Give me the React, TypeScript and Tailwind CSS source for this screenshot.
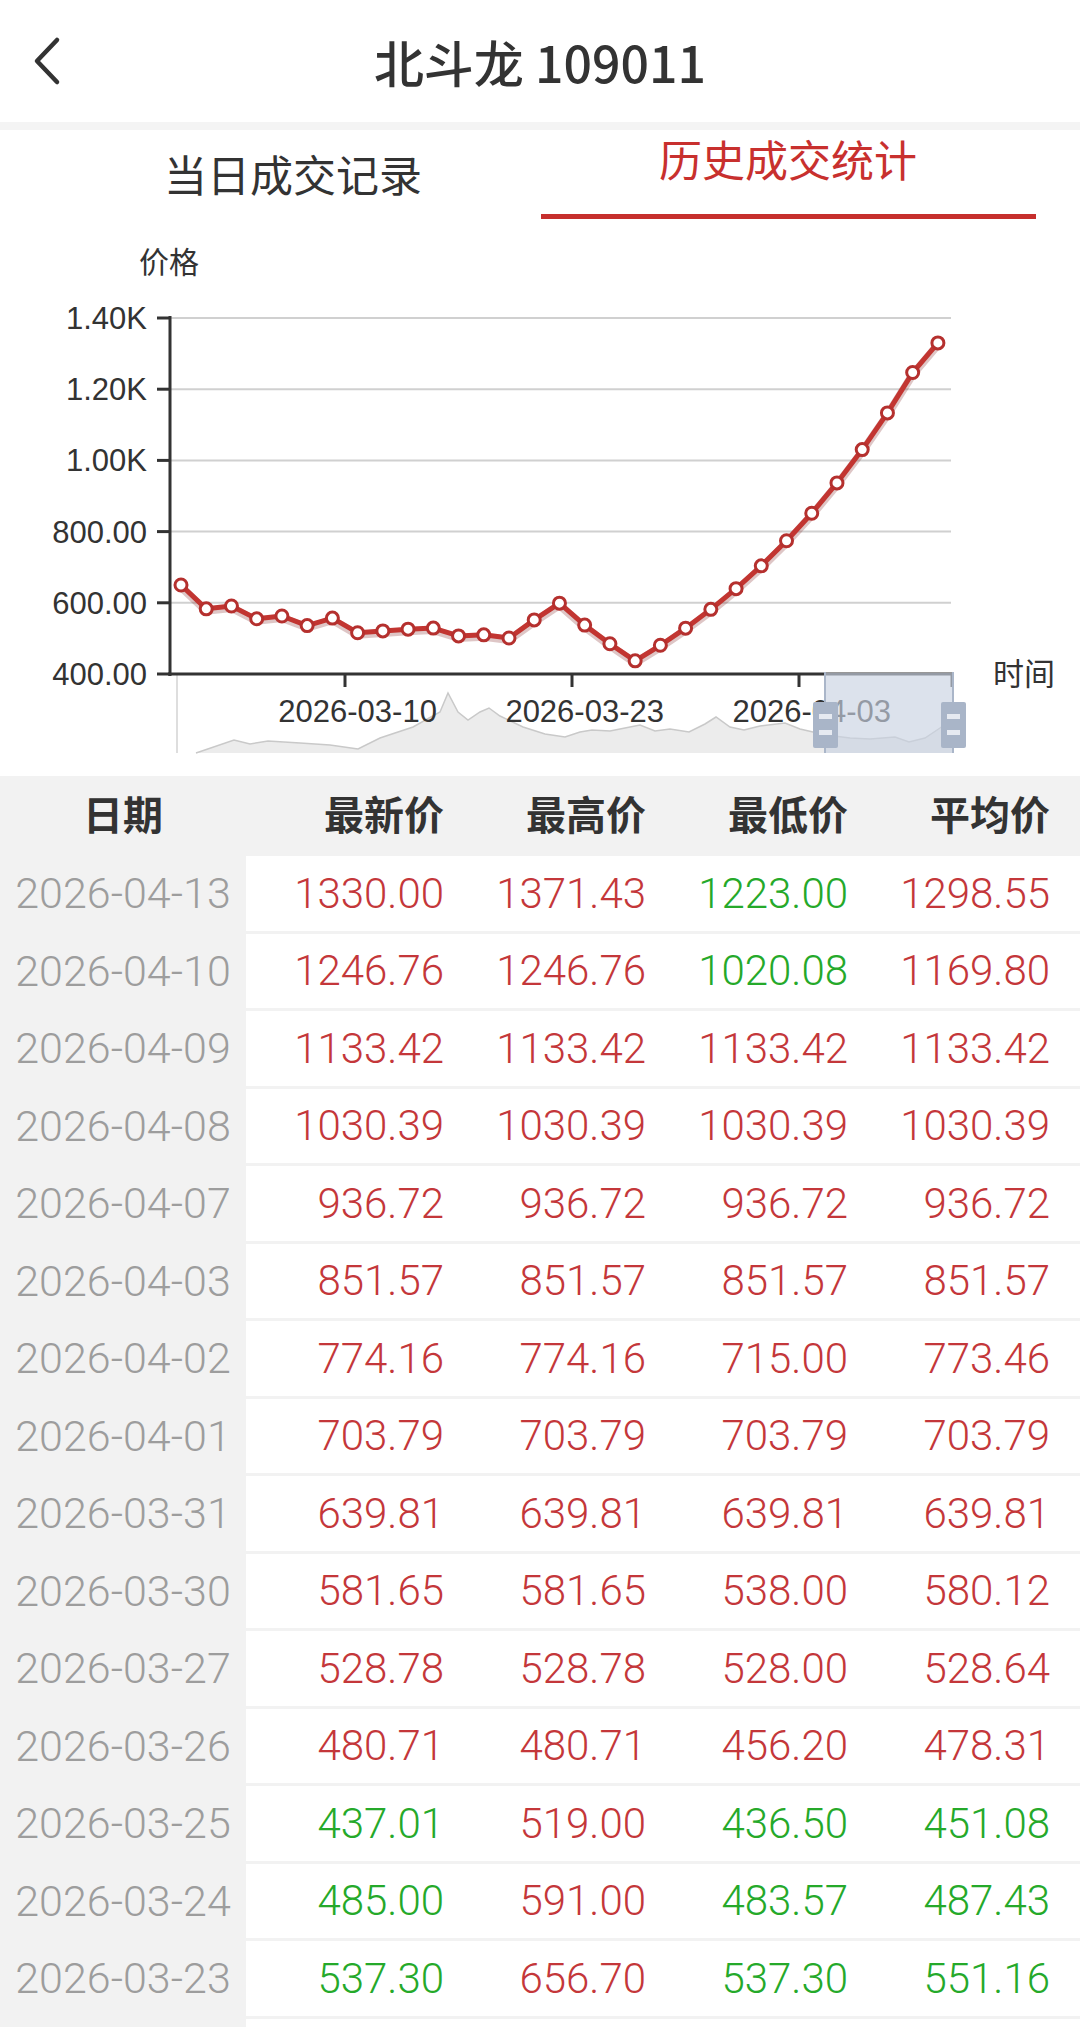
import React from 'react'

const UP = '#c4373a'
const DOWN = '#25a92a'

// latest price per day, oldest first (used for the chart)
const series = [
  650, 583, 591, 555, 563, 536, 557, 516, 521, 526, 529, 507, 510, 501, 552, 599,
  537.3, 485, 437.01, 480.71, 528.78, 581.65, 639.81, 703.79, 774.16, 851.57, 936.72,
  1030.39, 1133.42, 1246.76, 1330,
]

const rows = [
  ['2026-04-13', '1330.00', '1371.43', '1223.00', '1298.55'],
  ['2026-04-10', '1246.76', '1246.76', '1020.08', '1169.80'],
  ['2026-04-09', '1133.42', '1133.42', '1133.42', '1133.42'],
  ['2026-04-08', '1030.39', '1030.39', '1030.39', '1030.39'],
  ['2026-04-07', '936.72', '936.72', '936.72', '936.72'],
  ['2026-04-03', '851.57', '851.57', '851.57', '851.57'],
  ['2026-04-02', '774.16', '774.16', '715.00', '773.46'],
  ['2026-04-01', '703.79', '703.79', '703.79', '703.79'],
  ['2026-03-31', '639.81', '639.81', '639.81', '639.81'],
  ['2026-03-30', '581.65', '581.65', '538.00', '580.12'],
  ['2026-03-27', '528.78', '528.78', '528.00', '528.64'],
  ['2026-03-26', '480.71', '480.71', '456.20', '478.31'],
  ['2026-03-25', '437.01', '519.00', '436.50', '451.08'],
  ['2026-03-24', '485.00', '591.00', '483.57', '487.43'],
  ['2026-03-23', '537.30', '656.70', '537.30', '551.16'],
]

const px = (i: number) => 181 + i * 25.23
const py = (v: number) => 674 - (v - 400) * 0.356

const mini: [number, number][] = [
  [196, 753], [234, 740], [250, 744], [268, 741], [300, 743], [330, 745], [358, 749],
  [380, 738], [413, 727], [440, 712], [448, 693], [458, 712], [468, 720], [480, 712],
  [489, 708], [500, 716], [523, 727], [545, 734], [565, 737], [580, 732], [592, 730],
  [610, 731], [625, 728], [640, 725], [655, 731], [670, 729], [689, 732], [705, 724],
  [716, 717], [730, 727], [744, 730], [760, 726], [785, 723], [800, 729], [826, 735],
  [850, 738], [870, 739], [895, 737], [909, 742], [925, 738], [940, 728], [953, 718],
]

const axisFont = { fontFamily: '"Liberation Sans", Arial, sans-serif' }

function Chart() {
  const ticksY = ['1.40K', '1.20K', '1.00K', '800.00', '600.00', '400.00']
  const line = series.map((v, i) => `${px(i)},${py(v)}`).join(' ')
  const miniLine = mini.map(p => p.join(',')).join(' ')
  return (
    <svg width="1080" height="554" viewBox="0 222 1080 554" className="block">
      <text x="169" y="273" fontSize="30" fill="#333" textAnchor="middle" style={{ fontFamily: '"Noto Sans CJK SC", sans-serif' }}>价格</text>

      {ticksY.map((t, i) => {
        const y = 318 + i * 71.2
        return (
          <g key={t}>
            {i < 5 && <line x1="170" y1={y} x2="951" y2={y} stroke="#d0d0d0" strokeWidth="2" />}
            <line x1="157" y1={y} x2="170" y2={y} stroke="#333" strokeWidth="3" />
            <text x="147" y={y + 11} fontSize="31" fill="#333" textAnchor="end" style={axisFont}>{t}</text>
          </g>
        )
      })}

      {/* data zoom background */}
      <polygon points={`177,753 ${miniLine} 953,753`} fill="#ececec" />
      <polyline points={miniLine} fill="none" stroke="#c9c9c9" strokeWidth="1.5" />
      <line x1="177" y1="674" x2="177" y2="753" stroke="#dedede" strokeWidth="2" />

      <line x1="170" y1="316" x2="170" y2="676" stroke="#333" strokeWidth="3" />
      <line x1="168" y1="674" x2="953" y2="674" stroke="#333" strokeWidth="3" />
      {[345, 572, 799, 952].map(x => (
        <line key={x} x1={x} y1="674" x2={x} y2="687" stroke="#333" strokeWidth="3" />
      ))}
      {[['2026-03-10', 7], ['2026-03-23', 16], ['2026-04-03', 25]].map(([t, i]) => (
        <text key={t} x={px(i as number)} y="722" fontSize="31" fill="#333" textAnchor="middle" style={axisFont}>{t}</text>
      ))}
      <text x="993" y="685" fontSize="31" fill="#333" style={{ fontFamily: '"Noto Sans CJK SC", sans-serif' }}>时间</text>

      {/* selected window */}
      <rect x="825" y="673" width="128" height="80" fill="#c9d2e2" opacity="0.65" />
      <line x1="825" y1="672" x2="825" y2="753" stroke="#aab6c9" strokeWidth="2" />
      <line x1="953" y1="672" x2="953" y2="753" stroke="#aab6c9" strokeWidth="2" />
      {[813, 941].map(x => (
        <g key={x}>
          <rect x={x} y="702" width="25" height="46" rx="2" fill="#a9b5c8" />
          <rect x={x + 6} y="714" width="13" height="5" fill="#e6eaf1" />
          <rect x={x + 6} y="730" width="13" height="5" fill="#e6eaf1" />
        </g>
      ))}

      {/* price line */}
      <polyline points={line} fill="none" stroke="#7a1d1d" strokeOpacity="0.25" strokeWidth="8" strokeLinejoin="round" transform="translate(0 2)" />
      <polyline points={line} fill="none" stroke="#c23531" strokeWidth="5" strokeLinejoin="round" />
      {series.map((v, i) => (
        <circle key={i} cx={px(i)} cy={py(v)} r="6" fill="#fff" stroke="#b5302e" strokeWidth="3" />
      ))}
    </svg>
  )
}

export default function App() {
  const cjk = { fontFamily: '"Liberation Sans", "Noto Sans CJK SC", sans-serif' }
  const num = { fontFamily: 'Roboto, "Liberation Sans", sans-serif' }
  return (
    <div className="w-[1080px] bg-white text-[#333]" style={cjk}>
      {/* header */}
      <div className="grid h-[122px] grid-cols-[1fr_auto_1fr] items-center">
        <div className="pl-[33px]">
          <svg width="30" height="50" viewBox="0 0 30 50">
            <polyline points="24,4 4,25 24,46" fill="none" stroke="#333" strokeWidth="4.5" strokeLinecap="round" strokeLinejoin="round" />
          </svg>
        </div>
        <div className="text-[50px] leading-none font-medium" style={{ fontFamily: '"Noto Sans CJK SC", sans-serif' }}>
          北斗龙 109011
        </div>
        <div />
      </div>
      <div className="h-[8px] bg-[#f4f4f4]" />

      {/* tabs */}
      <div className="grid h-[92px] grid-cols-2">
        <div className="pt-[23px] pl-[46px] text-center text-[43px] leading-[48px] text-[#333]">当日成交记录</div>
        <div className="flex flex-col items-center">
          <div className="pt-[8px] pr-[44px] text-[43px] leading-[48px] text-[#c8302e]">历史成交统计</div>
          <div className="mt-[28px] ml-[1px] h-[5px] w-[495px] self-start bg-[#c62f2d]" />
        </div>
      </div>

      <Chart />

      {/* table */}
      <div className="bg-[#f2f2f2]">
        <div className="grid h-[80px] grid-cols-[246px_202px_202px_202px_202px] items-center text-[40px] font-bold text-[#333]">
          <div className="text-center">日期</div>
          <div className="pr-[4px] text-right">最新价</div>
          <div className="pr-[4px] text-right">最高价</div>
          <div className="pr-[4px] text-right">最低价</div>
          <div className="pr-[4px] text-right">平均价</div>
        </div>
        {rows.map((r, idx) => {
          const prev = idx + 1 < rows.length ? parseFloat(rows[idx + 1][1]) : 599
          return (
            <div key={r[0]} className="flex h-[77.5px] items-start">
              <div className="flex h-[74.5px] w-[246px] items-center justify-center text-[43px] font-light text-[#9d9d9d]" style={num}>
                {r[0]}
              </div>
              <div className="grid h-[74.5px] flex-1 grid-cols-[202px_202px_202px_202px] items-center bg-white text-[42px] font-light" style={num}>
                {r.slice(1).map((v, j) => (
                  <div key={j} className="pr-[4px] text-right" style={{ color: parseFloat(v) >= prev ? UP : DOWN }}>
                    {v}
                  </div>
                ))}
              </div>
            </div>
          )
        })}
        <div className="flex h-[77.5px]">
          <div className="w-[246px]" />
          <div className="flex-1 bg-white" />
        </div>
      </div>
    </div>
  )
}
